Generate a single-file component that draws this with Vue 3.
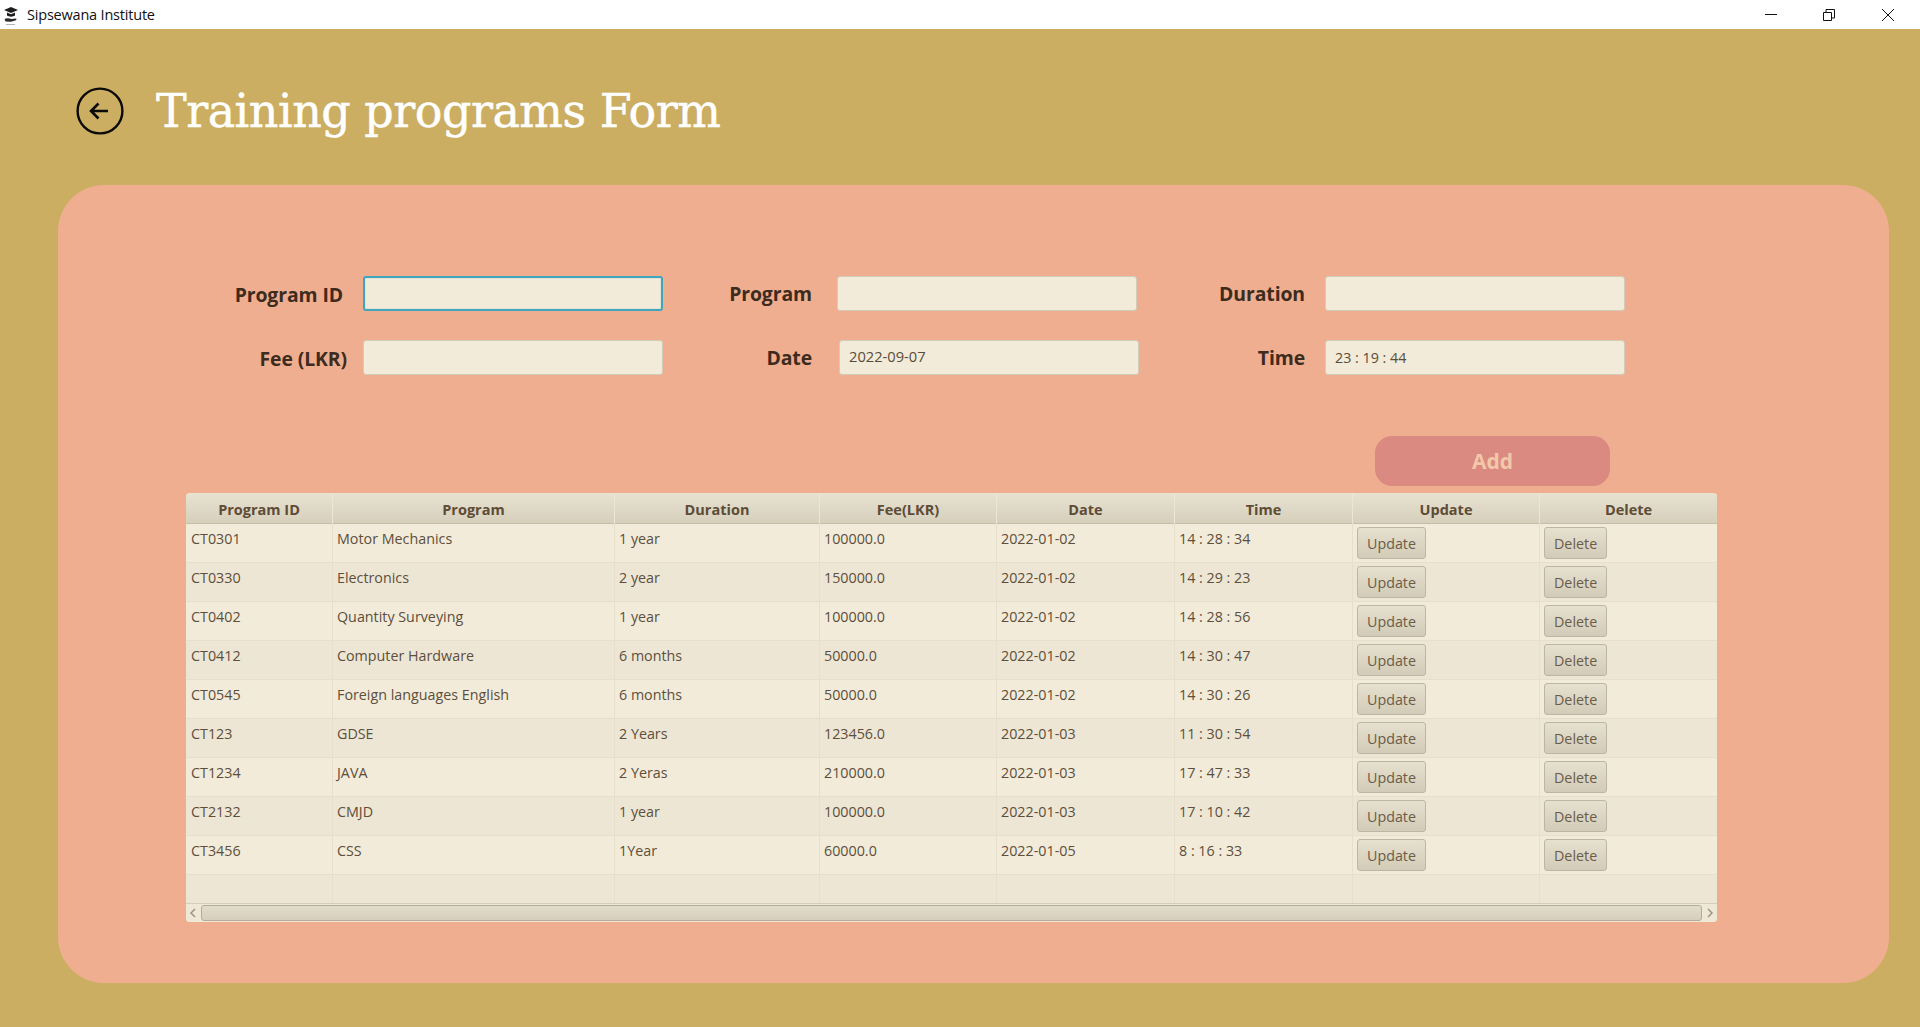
<script setup>
const columns = ['Program ID', 'Program', 'Duration', 'Fee(LKR)', 'Date', 'Time', 'Update', 'Delete']
const rows = [
  ['CT0301', 'Motor Mechanics', '1 year', '100000.0', '2022-01-02', '14 : 28 : 34'],
  ['CT0330', 'Electronics', '2 year', '150000.0', '2022-01-02', '14 : 29 : 23'],
  ['CT0402', 'Quantity Surveying', '1 year', '100000.0', '2022-01-02', '14 : 28 : 56'],
  ['CT0412', 'Computer Hardware', '6 months', '50000.0', '2022-01-02', '14 : 30 : 47'],
  ['CT0545', 'Foreign languages English', '6 months', '50000.0', '2022-01-02', '14 : 30 : 26'],
  ['CT123', 'GDSE', '2 Years', '123456.0', '2022-01-03', '11 : 30 : 54'],
  ['CT1234', 'JAVA', '2 Yeras', '210000.0', '2022-01-03', '17 : 47 : 33'],
  ['CT2132', 'CMJD', '1 year', '100000.0', '2022-01-03', '17 : 10 : 42'],
  ['CT3456', 'CSS', '1Year', '60000.0', '2022-01-05', '8 : 16 : 33']
]
</script>

<template>
  <div class="window">
    <div class="titlebar">
      <svg class="app-icon" viewBox="0 0 16 20" width="16" height="20">
        <path d="M8 1 15 4 8 7 1 4Z" fill="#1d1d1d" />
        <path d="M4 6.500v3c2 1.500 6 1.500 8 0v-3L8 8.200Z" fill="#1d1d1d" />
        <path d="M1.500 13c2.500-1.600 5-.6 7 0l4.500-.6c1 .6.300 1.700-.7 2L8 15.800 2.500 15.500Z" fill="#2b2b2b" />
        <path d="M3 18.500h9" stroke="#b5b5b5" stroke-width="1" />
      </svg>
      <span class="app-name">Sipsewana Institute</span>
      <div class="controls">
        <svg class="ctl" viewBox="0 0 12 12" width="12" height="12"><path d="M0 5.500h12" stroke="#111" stroke-width="1" /></svg>
        <svg class="ctl" viewBox="0 0 12 12" width="12" height="12" fill="none"><path d="M.5 3.500h8v8h-8zM3 3.500V.5h8.500v8.500H8.500" stroke="#111" /></svg>
        <svg class="ctl close" viewBox="0 0 12 12" width="12" height="12"><path d="M0 0 12 12M12 0 0 12" stroke="#111" stroke-width="1" /></svg>
      </div>
    </div>

    <header class="heading">
      <svg class="back" viewBox="0 0 48 48" width="48" height="48" fill="none" stroke="#0c0a05">
        <circle cx="24" cy="24" r="22.400" stroke-width="2.400" />
        <path d="M32 24H15.500M22.500 16.500 15 24l7.500 7.500" stroke-width="2.600" />
      </svg>
      <h1 class="title">Training programs Form</h1>
    </header>

    <main class="panel">
      <div class="form">
        <label class="lbl lbl-a">Program ID</label>
        <div class="input focused"></div>
        <label class="lbl lbl-m">Program</label>
        <div class="input"></div>
        <label class="lbl">Duration</label>
        <div class="input"></div>

        <label class="lbl lbl-b">Fee (LKR)</label>
        <div class="input"></div>
        <label class="lbl lbl-m">Date</label>
        <div class="input date">2022-09-07</div>
        <label class="lbl">Time</label>
        <div class="input">23 : 19 : 44</div>
      </div>

      <div class="actions">
        <button class="add">Add</button>
      </div>

      <div class="table">
        <div class="row head">
          <div v-for="c in columns" :key="c" class="th">{{ c }}</div>
        </div>
        <div v-for="(r, i) in rows" :key="r[0]" class="row body" :class="{ alt: i % 2 }">
          <div v-for="(v, j) in r" :key="j" class="td">{{ v }}</div>
          <div class="td btn-cell"><button class="mini">Update</button></div>
          <div class="td btn-cell"><button class="mini">Delete</button></div>
        </div>
        <div class="row body alt last">
          <div v-for="c in columns" :key="c" class="td"></div>
        </div>
        <div class="scrollbar">
          <svg class="arrow" viewBox="0 0 8 10" width="8" height="10" fill="none"><path d="M6 1 2 5l4 4" stroke="#9c9484" stroke-width="1.500" /></svg>
          <div class="thumb"></div>
          <svg class="arrow" viewBox="0 0 8 10" width="8" height="10" fill="none"><path d="M2 1l4 4-4 4" stroke="#9c9484" stroke-width="1.500" /></svg>
        </div>
      </div>
    </main>
  </div>
</template>

<style>
html, body { margin: 0; padding: 0; background: #cbae62; }
</style>

<style scoped>
.window {
  width: 1920px;
  height: 1027px;
  overflow: hidden;
  display: flex;
  flex-direction: column;
  background: #cbae62;
  font-family: "Open Sans", "Noto Sans", sans-serif;
}
.titlebar {
  height: 29px;
  background: #fff;
  display: flex;
  align-items: center;
  padding-left: 3px;
  flex: none;
}
.app-icon { flex: none; margin-right: 8px; margin-top: 2px; }
.app-name { font-size: 14.500px; color: #111; font-family: "Open Sans", sans-serif; letter-spacing: -0.2px; }
.controls { margin-left: auto; display: flex; gap: 46px; padding-right: 26px; }
.ctl { display: block; }
.close { margin-left: 1px; }
.heading {
  height: 156px;
  flex: none;
  display: flex;
  align-items: center;
  padding-left: 76px;
  box-sizing: border-box;
  padding-top: 8px;
}
.title {
  margin: 0 0 0 32px;
  font: 400 46px "DejaVu Serif", serif;
  color: #fff;
  letter-spacing: -0.5px;
  -webkit-text-stroke: 0.5px #fff;
}
.panel {
  margin-left: 58px;
  width: 1831px;
  height: 798px;
  box-sizing: border-box;
  background: #efae8f;
  border-radius: 46px;
  padding: 91px 172px 0 128px;
  flex: none;
}
.form {
  display: grid;
  grid-template-columns: 149px 300px 174px 300px 188px 300px;
  grid-auto-rows: 35px;
  row-gap: 29px;
  align-items: center;
  padding-left: 28px;
}
.lbl {
  text-align: right;
  font-size: 19.400px;
  font-weight: 700;
  letter-spacing: -0.1px;
  color: #3d2c1e;
  padding-right: 20px;
  white-space: nowrap;
}
.lbl-a { margin-top: 2px; }
.lbl-b { padding-right: 16px; margin-top: 2px; }
.lbl-m { padding-right: 25px; }
.input {
  height: 35px;
  box-sizing: border-box;
  background: #f2ebd9;
  border: 1px solid #d3ccb8;
  border-radius: 3px;
  font-size: 14.300px;
  color: #5b4c38;
  display: flex;
  align-items: center;
  padding-left: 9px;
}
.focused {
  border: 2px solid #3fa6c0;
  box-shadow: inset 0 0 0 1px #e4e2d0;
}
.date { transform: translateX(2px); align-items: flex-start; padding-top: 5px; font-size: 14.700px; }
.actions {
  display: flex;
  justify-content: flex-end;
  margin-top: 61px;
  padding-right: 107px;
}
.add {
  width: 235px;
  height: 50px;
  border: none;
  border-radius: 17px;
  background: #db8a82;
  color: #f2c8aa;
  font: 700 21px "Open Sans", sans-serif;
  padding: 0;
}
.table {
  width: 1531px;
  margin-top: 7px;
  background: #f2ebd9;
  border-radius: 4px;
  overflow: hidden;
}
.row {
  display: grid;
  grid-template-columns: 147px 282px 205px 177px 178px 178px 187px 177px;
}
.head {
  height: 31px;
  background: linear-gradient(#e8e2d2, #d6cfbb);
  border-bottom: 1px solid #c6bda7;
  box-sizing: border-box;
}
.th {
  text-align: center;
  font-size: 14.500px;
  font-weight: 700;
  line-height: 33px;
  color: #5d4c36;
  border-right: 1px solid #ece6d6;
  box-sizing: border-box;
}
.th:last-child, .td:last-child { border-right: none; }
.body {
  height: 39px;
  background: #f2ebd9;
  border-bottom: 1px solid #e6dfcc;
  box-sizing: border-box;
}
.alt { background: #ede6d4; }
.last { height: 29px; border-bottom: 1px solid #d5cdb9; }
.td {
  padding: 5px 0 0 4px;
  font-size: 14.300px;
  line-height: 20px;
  color: #5d4f3c;
  border-right: 1px solid #e6dfcc;
  box-sizing: border-box;
  white-space: nowrap;
}
.td:first-child { padding-left: 5px; }
.btn-cell { padding: 3px 0 0 4px; }
.mini {
  height: 32px;
  padding: 0 9px;
  background: linear-gradient(#e6e0cf, #d2cbb7);
  border: 1px solid #bdb6a2;
  border-radius: 3px;
  font: 14.300px "Open Sans", sans-serif;
  color: #6a5c48;
  display: block;
}
.scrollbar {
  height: 18px;
  display: flex;
  align-items: center;
  justify-content: space-between;
  padding: 0 3px;
  box-sizing: border-box;
  background: #efe8d6;
}
.thumb {
  flex: 1;
  height: 14px;
  margin: 0 4px;
  background: linear-gradient(#e2dccb, #d5cebb);
  border: 1px solid #b4ac98;
  border-radius: 3px;
}
.arrow { flex: none; }
</style>
